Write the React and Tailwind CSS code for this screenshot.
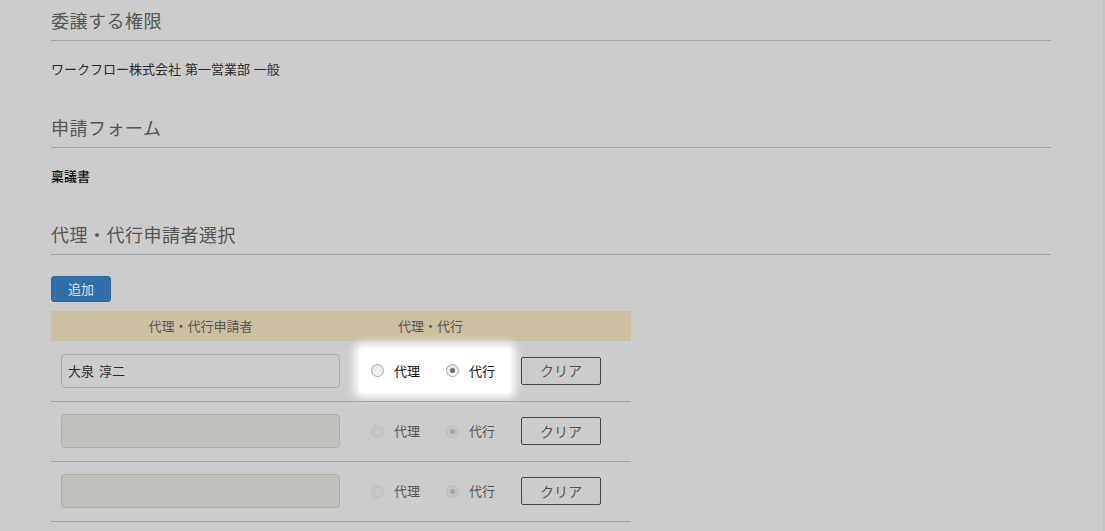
const FONT = { fontFamily: '"Noto Sans CJK JP", "Noto Sans", sans-serif' };

const rows = [
  { name: "大泉 淳二", active: true },
  { name: "", active: false },
  { name: "", active: false },
];

function Heading({ children, first }) {
  return (
    <div className={`${first ? "pt-[7px]" : "mt-[35px]"} pb-[7px] border-b border-[#a5a5a5] text-[18px] leading-[26px] text-[#555] tracking-[0.5px]`}>
      {children}
    </div>
  );
}

function Radio({ checked, disabled }) {
  return (
    <span
      className={`relative inline-block w-[13px] h-[13px] rounded-full border ${
        disabled ? "border-[#bdbdbd] bg-[#c6c6c6]" : "border-[#a9a9a9] bg-gradient-to-b from-[#e4e4e4] to-[#f6f6f6]"
      }`}
    >
      {checked && (
        <span className={`absolute left-[3px] top-[3px] w-[5px] h-[5px] rounded-full ${disabled ? "bg-[#a6a6a6]" : "bg-[#6a6a6a]"}`} />
      )}
    </span>
  );
}

function RadioGroup({ disabled }) {
  const text = disabled ? "text-[#555]" : "text-[#111]";
  return (
    <div className="flex items-center h-full pl-[12px]">
      <label className="flex items-center gap-[10px]">
        <Radio disabled={disabled} />
        <span className={`text-[13px] ${text}`}>代理</span>
      </label>
      <label className="flex items-center gap-[10px] ml-[26px]">
        <Radio checked disabled={disabled} />
        <span className={`text-[13px] ${text}`}>代行</span>
      </label>
    </div>
  );
}

export default function App() {
  return (
    <div className="min-h-[531px] bg-[#cccccc] border-r-2 border-[#c4c4c4]" style={FONT}>
      <div className="w-[1000px] ml-[51px]">
        <Heading first>委譲する権限</Heading>
        <div className="mt-[18px] text-[13px] leading-[20px] text-[#2a2a2a] [word-spacing:1px]">ワークフロー株式会社 第一営業部 一般</div>

        <Heading>申請フォーム</Heading>
        <div className="mt-[18px] text-[13px] leading-[20px] text-[#111] font-medium">稟議書</div>

        <Heading>代理・代行申請者選択</Heading>

        <button className="mt-[21px] w-[60px] h-[26px] rounded-[3px] bg-[#2f6faa] border border-[#2b65a0] text-[13px] text-[#d9e3ec]">
          追加
        </button>

        <table className="mt-[9px] w-[580px] border-collapse text-[13px]">
          <thead>
            <tr className="bg-[#cdc0a1] h-[30px] text-[#555]">
              <th className="w-[300px] font-normal">代理・代行申請者</th>
              <th className="w-[160px] font-normal">代理・代行</th>
              <th className="w-[120px] font-normal"></th>
            </tr>
          </thead>
          <tbody>
            {rows.map((r, i) => (
              <tr key={i} className="h-[60px] border-b border-[#a5a5a5]">
                <td className="px-[10px] align-middle">
                  <div
                    className={`h-[34px] rounded-[4px] border border-[#adadad] px-[6px] flex items-center text-[13px] text-[#2a2a2a] [word-spacing:2px] ${
                      r.active ? "" : "bg-[#c1c1bb]"
                    }`}
                  >
                    {r.name}
                  </div>
                </td>
                <td className="align-middle p-0">
                  {r.active ? (
                    <div className="h-[45px] w-[152px] ml-[9px] bg-white rounded-[3px] shadow-[0_0_9px_5px_rgba(255,255,255,0.95)]">
                      <RadioGroup />
                    </div>
                  ) : (
                    <div className="h-[45px] w-[152px] ml-[9px]">
                      <RadioGroup disabled />
                    </div>
                  )}
                </td>
                <td className="px-[10px] align-middle">
                  <button className="w-[80px] h-[28px] border border-[#444] rounded-[2px] text-[14px] text-[#555]">
                    クリア
                  </button>
                </td>
              </tr>
            ))}
          </tbody>
        </table>
      </div>
    </div>
  );
}
